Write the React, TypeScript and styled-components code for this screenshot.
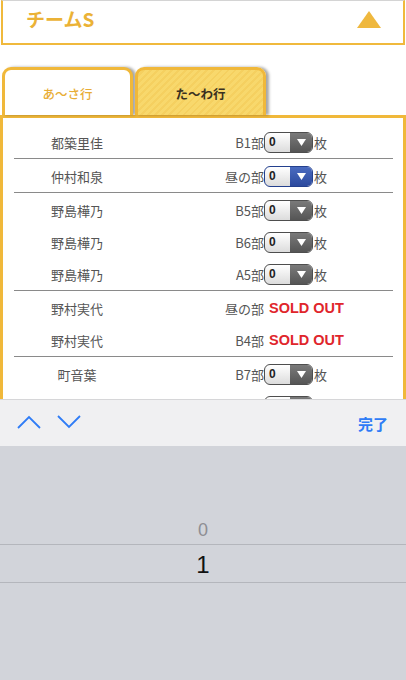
import React from 'react';
import styled, { createGlobalStyle } from 'styled-components';

const GlobalStyle = createGlobalStyle`
  *, *::before, *::after {
    box-sizing: border-box;
  }
  html, body {
    margin: 0;
    padding: 0;
    background: #ffffff;
    font-family: "Liberation Sans", "Noto Sans CJK JP", sans-serif;
  }
`;

type Entry = { name: string; part: string; sold?: boolean; active?: boolean };

const groups: Entry[][] = [
  [{ name: '都築里佳', part: 'B1部' }],
  [{ name: '仲村和泉', part: '昼の部', active: true }],
  [
    { name: '野島樺乃', part: 'B5部' },
    { name: '野島樺乃', part: 'B6部' },
    { name: '野島樺乃', part: 'A5部' },
  ],
  [
    { name: '野村実代', part: '昼の部', sold: true },
    { name: '野村実代', part: 'B4部', sold: true },
  ],
  [
    { name: '町音葉', part: 'B7部' },
    { name: '町音葉', part: 'B8部' },
  ],
];

export default function App() {
  return (
    <Screen>
      <GlobalStyle />
      <Page>
        <Header>
          <TeamTitle>チームS</TeamTitle>
          <Triangle />
        </Header>
        <Tabs>
          <Tab>あ〜さ行</Tab>
          <Tab $selected>た〜わ行</Tab>
        </Tabs>
        <Panel>
          {groups.map((group, gi) => (
            <Group key={gi} $first={gi === 0}>
              {group.map((e, i) => (
                <Row key={i}>
                  <Name>{e.name}</Name>
                  <Part>{e.part}</Part>
                  <Ticket>
                    {e.sold ? (
                      <SoldOut>SOLD OUT</SoldOut>
                    ) : (
                      <>
                        <Select $active={e.active}>
                          <SelectValue>0</SelectValue>
                          <SelectArrow $active={e.active}>
                            <svg width="9" height="7" viewBox="0 0 9 7">
                              <path d="M0 0 H9 L4.5 7 Z" fill="#ffffff" />
                            </svg>
                          </SelectArrow>
                        </Select>
                        <Unit>枚</Unit>
                      </>
                    )}
                  </Ticket>
                </Row>
              ))}
            </Group>
          ))}
        </Panel>
      </Page>
      <Toolbar>
        <NavButtons>
          <svg width="24" height="16" viewBox="0 0 24 16">
            <path d="M1 14 L12 3 L23 14" fill="none" stroke="#2f7cf6" strokeWidth="1.8" />
          </svg>
          <svg width="24" height="16" viewBox="0 0 24 16">
            <path d="M1 2 L12 13 L23 2" fill="none" stroke="#2f7cf6" strokeWidth="1.8" />
          </svg>
        </NavButtons>
        <Done>完了</Done>
      </Toolbar>
      <Picker>
        <PickerItem $dim>0</PickerItem>
        <PickerSelected>1</PickerSelected>
      </Picker>
    </Screen>
  );
}

const Screen = styled.div`
  width: 406px;
  height: 680px;
  display: flex;
  flex-direction: column;
  overflow: hidden;
`;

const Page = styled.div`
  height: 399px;
  overflow: hidden;
  flex-shrink: 0;
`;

const Header = styled.div`
  margin: 0 1px;
  height: 45px;
  border: 2px solid #f0b93c;
  border-top: 1px solid #d4d4d4;
  display: flex;
  align-items: center;
  justify-content: space-between;
  padding: 0 22px 8px 23px;
`;

const TeamTitle = styled.div`
  font-family: "Noto Sans CJK JP", sans-serif;
  font-size: 19px;
  font-weight: 700;
  color: #ebb236;
`;

const Triangle = styled.div`
  width: 0;
  height: 0;
  border-left: 12px solid transparent;
  border-right: 12px solid transparent;
  border-bottom: 17px solid #efb83e;
  margin-top: 2px;
`;

const Tabs = styled.div`
  display: flex;
  gap: 2px;
  margin-top: 22px;
  padding-left: 2px;
  height: 48px;
`;

const Tab = styled.div<{ $selected?: boolean }>`
  width: 131px;
  border: 3px solid #f0b83a;
  border-bottom: none;
  border-radius: 9px 9px 0 0;
  box-shadow: 3px 0 3px rgba(0, 0, 0, 0.35);
  display: flex;
  align-items: center;
  justify-content: center;
  font-family: "Noto Sans CJK JP", sans-serif;
  font-size: 12.5px;
  font-weight: ${(p) => (p.$selected ? 700 : 500)};
  color: ${(p) => (p.$selected ? '#3a3020' : '#e8ad35')};
  background: ${(p) =>
    p.$selected
      ? 'repeating-linear-gradient(135deg, #f8d86c 0px, #f8d86c 3px, #f5d060 3px, #f5d060 5px)'
      : '#ffffff'};
  padding-top: 2px;
`;

const Panel = styled.div`
  border: 3px solid #f0b83a;
  padding: 7px 10px 0 11px;
  height: 400px;
`;

const Group = styled.div<{ $first?: boolean }>`
  padding-top: 1px;
  border-top: ${(p) => (p.$first ? 'none' : '1px solid #8a8a8a')};
`;

const Row = styled.div`
  display: grid;
  grid-template-columns: 126px 124px 1fr;
  align-items: center;
  height: 32px;
  font-family: "Noto Sans CJK JP", sans-serif;
  font-size: 13px;
  color: #555555;
`;

const Name = styled.div`
  text-align: center;
`;

const Part = styled.div`
  text-align: right;
`;

const Ticket = styled.div`
  display: flex;
  align-items: center;
`;

const Select = styled.div<{ $active?: boolean }>`
  width: 49px;
  height: 21px;
  border: 1px solid ${(p) => (p.$active ? '#24408e' : '#4e4e4e')};
  border-radius: 6px;
  display: flex;
  overflow: hidden;
  background: linear-gradient(#ffffff, #dcdcdc);
`;

const SelectValue = styled.div`
  flex: 1;
  font-family: "Liberation Sans", sans-serif;
  font-size: 12px;
  font-weight: 700;
  color: #222222;
  padding-left: 4px;
  display: flex;
  align-items: center;
`;

const SelectArrow = styled.div<{ $active?: boolean }>`
  width: 22px;
  display: flex;
  align-items: center;
  justify-content: center;
  background: ${(p) =>
    p.$active
      ? 'linear-gradient(#4a6bc0, #2c4a9e)'
      : 'linear-gradient(#7a7a7a, #555555)'};
`;

const Unit = styled.span`
  margin-left: 1px;
`;

const SoldOut = styled.span`
  font-family: "Liberation Sans", sans-serif;
  font-size: 14.5px;
  font-weight: 700;
  color: #e0252b;
  margin-left: 5px;
`;

const Toolbar = styled.div`
  height: 47px;
  flex-shrink: 0;
  background: #f0f0f2;
  border-top: 1px solid #d6d6d8;
  display: flex;
  align-items: center;
  justify-content: space-between;
  padding: 0 18px 0 17px;
`;

const NavButtons = styled.div`
  display: flex;
  gap: 16px;
  margin-top: -3px;
`;

const Done = styled.div`
  font-family: "Noto Sans CJK JP", sans-serif;
  font-size: 15px;
  font-weight: 700;
  color: #2f7cf6;
`;

const Picker = styled.div`
  flex: 1;
  background: #d2d4da;
  display: flex;
  flex-direction: column;
  padding-top: 69px;
`;

const PickerItem = styled.div<{ $dim?: boolean }>`
  height: 30px;
  display: flex;
  align-items: center;
  justify-content: center;
  font-family: "Liberation Sans", sans-serif;
  font-size: 18px;
  color: ${(p) => (p.$dim ? '#8e8e93' : '#000000')};
  border-bottom: 1px solid #b4b6bc;
  padding-top: 2px;
`;

const PickerSelected = styled.div`
  height: 38px;
  display: flex;
  align-items: center;
  justify-content: center;
  font-family: "Liberation Sans", sans-serif;
  font-size: 24px;
  color: #111111;
  border-bottom: 1px solid #b4b6bc;
  padding-top: 2px;
`;
